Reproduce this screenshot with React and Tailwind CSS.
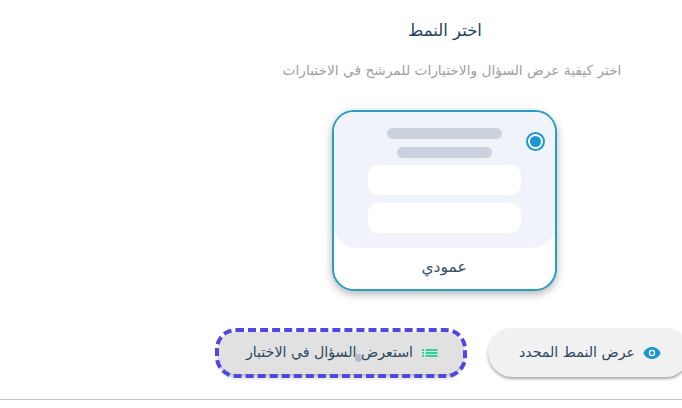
import React from 'react';

const arabicFont = { fontFamily: '"DejaVu Sans", "Noto Sans", sans-serif' };

function ListIcon() {
  return (
    <svg width="16" height="10" viewBox="0 0 16 10" className="shrink-0">
      <rect x="0" y="1" width="2" height="2" fill="#34d399" />
      <rect x="0" y="4" width="2" height="2" fill="#34d399" />
      <rect x="0" y="7" width="2" height="2" fill="#34d399" />
      <rect x="3.5" y="1" width="12" height="2" fill="#34d399" />
      <rect x="3.5" y="4" width="12" height="2" fill="#34d399" />
      <rect x="3.5" y="7" width="12" height="2" fill="#34d399" />
    </svg>
  );
}

function EyeIcon() {
  return (
    <svg width="18" height="12" viewBox="0 0 18 12" className="shrink-0">
      <path d="M9 0C5 0 1.8 2.4 0.3 6 1.8 9.6 5 12 9 12s7.200-2.400 8.700-6C16.200 2.400 13 0 9 0z" fill="#1c97cf" />
      <circle cx="9" cy="6" r="3.200" fill="#fff" />
      <circle cx="9" cy="6" r="1.900" fill="#1c97cf" />
    </svg>
  );
}

function LayoutCard() {
  return (
    <div className="relative w-[225px] h-[181px] rounded-[22px] border-2 border-[#2a9dc4] bg-white shadow-[0_3px_8px_rgba(0,0,0,0.3)] overflow-hidden flex flex-col">
      <div className="h-[136px] bg-[#f0f3f9] rounded-b-[22px] flex flex-col items-center pt-[16px]">
        <div className="w-[115px] h-[11px] rounded-full bg-[#cbd2de]" />
        <div className="w-[95px] h-[11px] rounded-full bg-[#cbd2de] mt-[8px]" />
        <div className="w-[153px] h-[30px] rounded-[10px] bg-white mt-[7px]" />
        <div className="w-[153px] h-[30px] rounded-[10px] bg-white mt-[8px]" />
      </div>
      <div className="flex-1 flex items-center justify-center text-[15.5px] text-[#3b5068] pb-[2px]" style={arabicFont}>
        عمودي
      </div>
      <div className="absolute top-[20px] right-[10px] w-[19px] h-[19px] rounded-full border-2 border-[#1c97cf] bg-white flex items-center justify-center">
        <div className="w-[11px] h-[11px] rounded-full bg-[#1c97cf]" />
      </div>
    </div>
  );
}

export default function App() {
  return (
    <div dir="rtl" className="w-[682px] h-[408px] bg-white overflow-hidden flex flex-col" style={arabicFont}>
      <div className="h-[399px] flex flex-col">
        <div className="flex flex-col items-center pl-[208px]">
          <h1 className="mt-[20px] text-[16.5px] leading-[22px] font-normal text-[#1f4060]">اختر النمط</h1>
          <p className="mt-[17px] text-[13.75px] leading-[22px] text-[#a0a0a0] whitespace-nowrap mr-[-14px]">
            اختر كيفية عرض السؤال والاختيارات للمرشح في الاختبارات
          </p>
          <div className="mt-[29px] mr-[2px]">
            <LayoutCard />
          </div>
        </div>
        <div className="flex items-center gap-[25px] mt-[37px] mr-[-8px] shrink-0">
          <button className="w-[202px] h-[49px] shrink-0 rounded-[25px] bg-[#f1f1f1] shadow-[0_2px_3px_rgba(0,0,0,0.35)] flex items-center gap-[8px] pr-[29px] text-[14.2px] text-[#2c4763]">
            <EyeIcon />
            <span>عرض النمط المحدد</span>
          </button>
          <button className="relative w-[244px] h-[42px] shrink-0 rounded-[17px] bg-[#e1e1e1] shadow-[0_3px_5px_rgba(0,0,0,0.3)] outline-[4px] outline-dashed outline-[#5146e0] flex items-center gap-[9px] pr-[25px] text-[14.2px] text-[#2c4763]">
            <ListIcon />
            <span>استعرض السؤال في الاختبار</span>
            <span className="absolute left-[136px] top-[22px] w-[7px] h-[8px] rounded-full bg-[#b3bcc8]" />
          </button>
        </div>
      </div>
      <div className="h-px bg-[#c4c4c4]" />
    </div>
  );
}
